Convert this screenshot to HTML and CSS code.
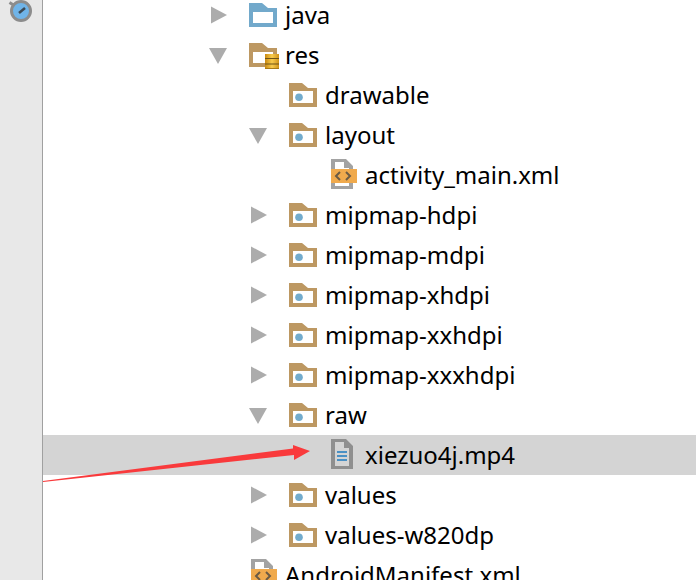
FILE: index.html
```html
<!DOCTYPE html>
<html lang="en">
<head>
    <meta charset="UTF-8">
    <meta name="viewport" content="width=device-width, initial-scale=1.0">
    <title>Project Tree</title>
    <link rel="stylesheet" href="styles.css">
</head>
<body>

    <!-- Shared icons -->
    <svg class="defs" width="0" height="0">
        <defs>
            <linearGradient id="gold">
                <stop offset="0" stop-color="#c98a12"/>
                <stop offset="0.500" stop-color="#f8cb4e"/>
                <stop offset="1" stop-color="#d0931a"/>
            </linearGradient>
        </defs>
        <symbol id="arrow-right" viewBox="0 0 18 18"><path d="M2 0.500L18 9L2 17.500Z"/></symbol>
        <symbol id="arrow-down" viewBox="0 0 18 18"><path d="M0 2H18L9 18Z"/></symbol>
        <symbol id="folder" viewBox="0 0 28 24"><path fill-rule="evenodd" d="M0 0H13L19 5H28V24H0ZM4 9V20H24V9Z"/></symbol>
        <symbol id="res-folder" viewBox="0 0 28 24">
            <path fill="#bd9862" fill-rule="evenodd" d="M0 0H13L19 5H28V24H0ZM4 8V20H24V8Z"/>
            <circle cx="10" cy="14.300" r="3.800" fill="#72abcd"/>
        </symbol>
        <symbol id="xml-file" viewBox="0 0 26 30">
            <path fill="#a3a3a3" fill-rule="evenodd" d="M0 0H15L22 7V30H0ZM4 3V27H18V9H13V3Z"/>
            <rect y="10" width="26" height="14" fill="#f0aa4d"/>
            <path d="M9 13L5 17L9 21M15 13L19 17L15 21" fill="none" stroke="#6b5b45" stroke-width="2"/>
        </symbol>
    </svg>

    <div class="sidebar">
        <svg class="timer" width="26" height="26" viewBox="0 0 26 26">
            <path d="M1.500 4.500L7 8" stroke="#8c8c8c" stroke-width="3"/>
            <circle cx="13" cy="13" r="9.500" fill="#70b4e8" stroke="#8c8c8c" stroke-width="3"/>
            <path d="M11 15L17 10" stroke="#3c4a55" stroke-width="2.500"/>
        </svg>
    </div>

    <!-- Project tree -->
    <ul class="tree">
        <li class="row level-1">
            <svg class="arrow"><use href="#arrow-right"/></svg>
            <svg class="icon java-folder"><use href="#folder"/></svg>
            <span>java</span>
        </li>
        <li class="row level-1">
            <svg class="arrow"><use href="#arrow-down"/></svg>
            <span class="icon-wrap">
                <svg class="icon"><use href="#folder"/></svg>
                <svg class="coins" width="14" height="15" viewBox="0 0 14 15">
                    <rect width="14" height="15" fill="url(#gold)"/>
                    <rect y="4" width="14" height="1" fill="#6d5216"/>
                    <rect y="9.500" width="14" height="1" fill="#6d5216"/>
                    <rect y="14" width="14" height="1" fill="#a87a18"/>
                </svg>
            </span>
            <span>res</span>
        </li>
        <li class="row level-2 no-arrow">
            <svg class="icon"><use href="#res-folder"/></svg>
            <span>drawable</span>
        </li>
        <li class="row level-2">
            <svg class="arrow"><use href="#arrow-down"/></svg>
            <svg class="icon"><use href="#res-folder"/></svg>
            <span>layout</span>
        </li>
        <li class="row level-3">
            <svg class="icon file"><use href="#xml-file"/></svg>
            <span>activity_main.xml</span>
        </li>
        <li class="row level-2">
            <svg class="arrow"><use href="#arrow-right"/></svg>
            <svg class="icon"><use href="#res-folder"/></svg>
            <span>mipmap-hdpi</span>
        </li>
        <li class="row level-2">
            <svg class="arrow"><use href="#arrow-right"/></svg>
            <svg class="icon"><use href="#res-folder"/></svg>
            <span>mipmap-mdpi</span>
        </li>
        <li class="row level-2">
            <svg class="arrow"><use href="#arrow-right"/></svg>
            <svg class="icon"><use href="#res-folder"/></svg>
            <span>mipmap-xhdpi</span>
        </li>
        <li class="row level-2">
            <svg class="arrow"><use href="#arrow-right"/></svg>
            <svg class="icon"><use href="#res-folder"/></svg>
            <span>mipmap-xxhdpi</span>
        </li>
        <li class="row level-2">
            <svg class="arrow"><use href="#arrow-right"/></svg>
            <svg class="icon"><use href="#res-folder"/></svg>
            <span>mipmap-xxxhdpi</span>
        </li>
        <li class="row level-2">
            <svg class="arrow"><use href="#arrow-down"/></svg>
            <svg class="icon"><use href="#res-folder"/></svg>
            <span>raw</span>
        </li>
        <li class="row level-3 selected">
            <svg class="icon file" viewBox="0 0 26 30">
                <path fill="#8f8f8f" fill-rule="evenodd" d="M0 0H15L22 7V30H0ZM4 3V27H18V9H13V3Z"/>
                <path d="M6 13H16M6 17H16M6 21H16" stroke="#4a90c4" stroke-width="2"/>
            </svg>
            <span>xiezuo4j.mp4</span>
        </li>
        <li class="row level-2">
            <svg class="arrow"><use href="#arrow-right"/></svg>
            <svg class="icon"><use href="#res-folder"/></svg>
            <span>values</span>
        </li>
        <li class="row level-2">
            <svg class="arrow"><use href="#arrow-right"/></svg>
            <svg class="icon"><use href="#res-folder"/></svg>
            <span>values-w820dp</span>
        </li>
        <li class="row level-1 no-arrow">
            <svg class="icon file"><use href="#xml-file"/></svg>
            <span>AndroidManifest.xml</span>
        </li>
    </ul>

    <!-- Red annotation arrow -->
    <svg class="annotation" width="696" height="580" viewBox="0 0 696 580">
        <path d="M43 481L293 448.500L293 445L310 451L294 460L294 455L43 482Z" fill="#f93a3c"/>
    </svg>

</body>
</html>
```

FILE: styles.css
```css
/* General Styles */
html, body { height: 100%; }
body { font-family: "Noto Sans", sans-serif; margin: 0; padding: 0; background: white; color: black; display: flex; overflow: hidden; }
.defs { position: absolute; }

/* Left tool strip */
.sidebar { flex: none; width: 42px; background: #e8e8e8; border-right: 1px solid #a0a0a0; }
.timer { display: block; margin: -2px 0 0 8px; }

/* Tree */
.tree { flex: 1; list-style: none; margin: -5px 0 0; padding: 0; font-size: 24px; }
.row { display: flex; align-items: center; height: 40px; white-space: nowrap; }
.row span { margin-bottom: 2px; }
.row.selected { background: #d4d4d4; }
.level-1 { padding-left: 166px; }
.level-2 { padding-left: 206px; }
.level-3 { padding-left: 288px; }
.level-1.no-arrow { padding-left: 208px; }
.level-2.no-arrow { padding-left: 246px; }

/* Icons */
.arrow { flex: none; width: 18px; height: 18px; margin-right: 22px; fill: #acacac; }
.icon { flex: none; width: 28px; height: 24px; margin-right: 8px; fill: #bd9862; }
.java-folder { fill: #72a9cb; }
.icon.file { width: 26px; height: 30px; margin-right: 8px; margin-bottom: 2px; }
.row .icon-wrap { position: relative; display: flex; margin-bottom: 0; }
.coins { position: absolute; left: 16px; top: 11px; }
.annotation { position: absolute; left: 0; top: 0; pointer-events: none; }
```
